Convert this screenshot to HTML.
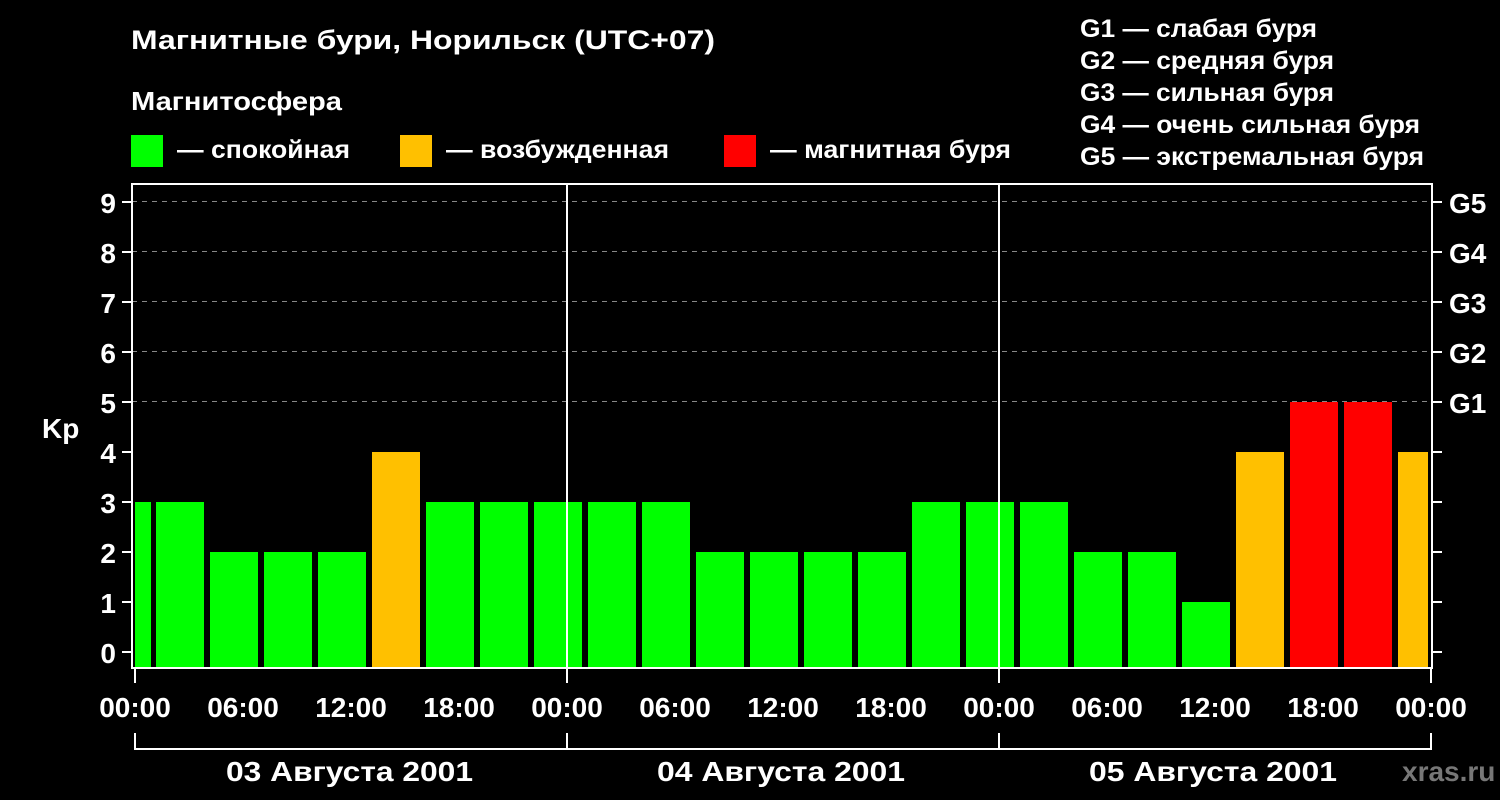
<!DOCTYPE html><html><head><meta charset="utf-8"><style>body{margin:0;background:#000}svg{display:block}text{font-family:"Liberation Sans",sans-serif;font-weight:bold;fill:#fff}</style></head><body>
<svg width="1500" height="800" viewBox="0 0 1500 800">
<rect width="1500" height="800" fill="#000"/>
<text x="131" y="49" font-size="27" textLength="584" lengthAdjust="spacingAndGlyphs">Магнитные бури, Норильск (UTC+07)</text>
<text x="131" y="110" font-size="26" textLength="211" lengthAdjust="spacingAndGlyphs">Магнитосфера</text>
<rect x="131" y="135" width="32" height="32" fill="#00ff00"/><text x="177" y="158" font-size="25" textLength="173" lengthAdjust="spacingAndGlyphs">— спокойная</text>
<rect x="400" y="135" width="32" height="32" fill="#ffc000"/><text x="446" y="158" font-size="25" textLength="223" lengthAdjust="spacingAndGlyphs">— возбужденная</text>
<rect x="724" y="135" width="32" height="32" fill="#ff0000"/><text x="770" y="158" font-size="25" textLength="241" lengthAdjust="spacingAndGlyphs">— магнитная буря</text>
<g font-size="25"><text x="1080" y="37" textLength="237" lengthAdjust="spacingAndGlyphs">G1 — слабая буря</text><text x="1080" y="69" textLength="254" lengthAdjust="spacingAndGlyphs">G2 — средняя буря</text><text x="1080" y="101" textLength="254" lengthAdjust="spacingAndGlyphs">G3 — сильная буря</text><text x="1080" y="133" textLength="340" lengthAdjust="spacingAndGlyphs">G4 — очень сильная буря</text><text x="1080" y="165" textLength="344" lengthAdjust="spacingAndGlyphs">G5 — экстремальная буря</text></g>
<g stroke="#888" stroke-width="1" stroke-dasharray="5,5">
<line x1="132" y1="201.5" x2="1432" y2="201.5"/><line x1="132" y1="251.5" x2="1432" y2="251.5"/><line x1="132" y1="301.5" x2="1432" y2="301.5"/><line x1="132" y1="351.5" x2="1432" y2="351.5"/><line x1="132" y1="401.5" x2="1432" y2="401.5"/></g>
<g>
<rect x="135" y="502" width="16" height="166" fill="#00ff00"/>
<rect x="156" y="502" width="48" height="166" fill="#00ff00"/>
<rect x="210" y="552" width="48" height="116" fill="#00ff00"/>
<rect x="264" y="552" width="48" height="116" fill="#00ff00"/>
<rect x="318" y="552" width="48" height="116" fill="#00ff00"/>
<rect x="372" y="452" width="48" height="216" fill="#ffc000"/>
<rect x="426" y="502" width="48" height="166" fill="#00ff00"/>
<rect x="480" y="502" width="48" height="166" fill="#00ff00"/>
<rect x="534" y="502" width="48" height="166" fill="#00ff00"/>
<rect x="588" y="502" width="48" height="166" fill="#00ff00"/>
<rect x="642" y="502" width="48" height="166" fill="#00ff00"/>
<rect x="696" y="552" width="48" height="116" fill="#00ff00"/>
<rect x="750" y="552" width="48" height="116" fill="#00ff00"/>
<rect x="804" y="552" width="48" height="116" fill="#00ff00"/>
<rect x="858" y="552" width="48" height="116" fill="#00ff00"/>
<rect x="912" y="502" width="48" height="166" fill="#00ff00"/>
<rect x="966" y="502" width="48" height="166" fill="#00ff00"/>
<rect x="1020" y="502" width="48" height="166" fill="#00ff00"/>
<rect x="1074" y="552" width="48" height="116" fill="#00ff00"/>
<rect x="1128" y="552" width="48" height="116" fill="#00ff00"/>
<rect x="1182" y="602" width="48" height="66" fill="#00ff00"/>
<rect x="1236" y="452" width="48" height="216" fill="#ffc000"/>
<rect x="1290" y="402" width="48" height="266" fill="#ff0000"/>
<rect x="1344" y="402" width="48" height="266" fill="#ff0000"/>
<rect x="1398" y="452" width="30" height="216" fill="#ffc000"/>
</g>
<g stroke="#fff" stroke-width="2" fill="none">
<rect x="132" y="184" width="1300" height="484"/>
<line x1="567" y1="184" x2="567" y2="668"/><line x1="999" y1="184" x2="999" y2="668"/>
<path d="M122 652H132M122 602H132M122 552H132M122 502H132M122 452H132M122 402H132M122 352H132M122 302H132M122 252H132M122 202H132"/>
<path d="M1432 652H1442M1432 602H1442M1432 552H1442M1432 502H1442M1432 452H1442M1432 402H1442M1432 352H1442M1432 302H1442M1432 252H1442M1432 202H1442"/>
<path d="M135 668V683M567 668V683M999 668V683M1431 668V683"/>
<path d="M135 733V749H1431V733M567 733V749M999 733V749"/>
</g>
<g font-size="28" text-anchor="end"><text x="116" y="663">0</text><text x="116" y="613">1</text><text x="116" y="563">2</text><text x="116" y="513">3</text><text x="116" y="463">4</text><text x="116" y="413">5</text><text x="116" y="363">6</text><text x="116" y="313">7</text><text x="116" y="263">8</text><text x="116" y="213">9</text></g>
<text x="42" y="438" font-size="28">Kp</text>
<g font-size="28"><text x="1449" y="213">G5</text><text x="1449" y="263">G4</text><text x="1449" y="313">G3</text><text x="1449" y="363">G2</text><text x="1449" y="413">G1</text></g>
<g font-size="28" text-anchor="middle"><text x="135" y="717">00:00</text><text x="243" y="717">06:00</text><text x="351" y="717">12:00</text><text x="459" y="717">18:00</text><text x="567" y="717">00:00</text><text x="675" y="717">06:00</text><text x="783" y="717">12:00</text><text x="891" y="717">18:00</text><text x="999" y="717">00:00</text><text x="1107" y="717">06:00</text><text x="1215" y="717">12:00</text><text x="1323" y="717">18:00</text><text x="1431" y="717">00:00</text></g>
<g font-size="28"><text x="226" y="781" textLength="247" lengthAdjust="spacingAndGlyphs">03 Августа 2001</text><text x="657" y="781" textLength="248" lengthAdjust="spacingAndGlyphs">04 Августа 2001</text><text x="1089" y="781" textLength="248" lengthAdjust="spacingAndGlyphs">05 Августа 2001</text></g>
<text x="1402" y="781" font-size="28" style="fill:#777">xras.ru</text>
</svg></body></html>
